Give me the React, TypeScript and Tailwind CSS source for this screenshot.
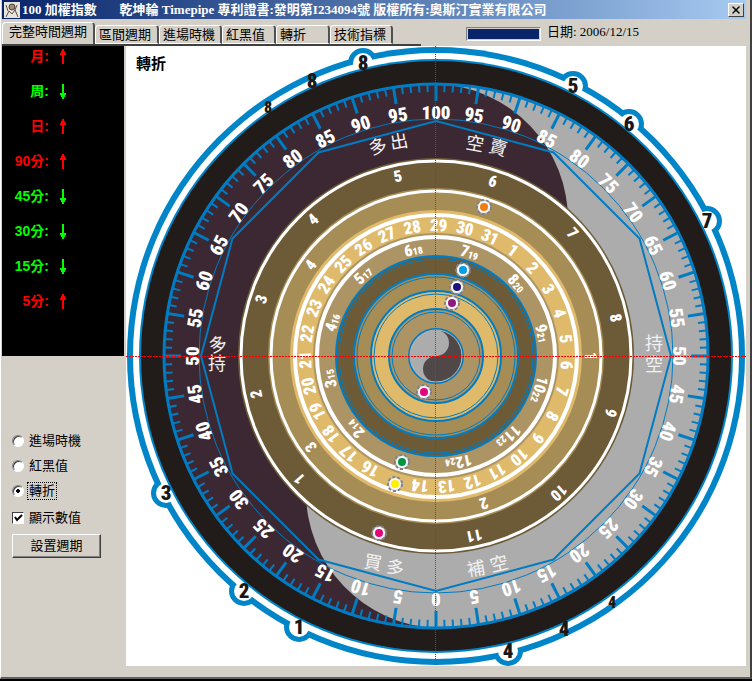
import type { ReactNode } from "react";
import { X } from "lucide-react";

const BLUE = "#0085c8";
const LINE = "#007cc3";
const DARK = "#6d5b38";
const MID = "#a68c55";
const GOLD = "#e0ba6b";
const TAN = "#ad9464";

const NUM =
  "Impact, 'Roboto Condensed', 'Open Sans Condensed', 'Noto Sans Condensed', 'Liberation Sans Narrow', 'Liberation Sans', sans-serif";
const CJK = "'Noto Sans CJK TC', sans-serif";

// centre of the dial inside the 620x620 view box
const C = 310;

const tabs = ["完整時間週期", "區間週期", "進場時機", "紅黑值", "轉折", "技術指標"];

const tabWidths = ["w-[64px]", "w-[63px]", "w-[54px]", "w-[54px]", "w-[63px]"];

const signals = [
  { label: "月", up: true },
  { label: "周", up: false },
  { label: "日", up: true },
  { label: "90分", up: true },
  { label: "45分", up: false },
  { label: "30分", up: false },
  { label: "15分", up: false },
  { label: "5分", up: true },
];

const bumps = [
  { x: 237, y: 17, t: "8" },
  { x: 447, y: 40, t: "5" },
  { x: 503, y: 78, t: "6" },
  { x: 581, y: 175, t: "7" },
  { x: 40, y: 447, t: "3" },
  { x: 118, y: 545, t: "2" },
  { x: 173, y: 581, t: "1" },
  { x: 382, y: 605, t: "4" },
];

const outerMarks = [
  { x: 186, y: 35, t: "8", size: 21 },
  { x: 142, y: 60, t: "8", size: 16 },
  { x: 438, y: 583, t: "4", size: 21 },
  { x: 486, y: 555, t: "4", size: 16 },
];

const markers = [
  { x: 358, y: 161, fill: "#f07d12" },
  { x: 337, y: 224, fill: "#009de8" },
  { x: 331, y: 241, fill: "#1d1278" },
  { x: 326, y: 257, fill: "#8e1a7d" },
  { x: 298, y: 346, fill: "#e5007e" },
  { x: 276, y: 416, fill: "#009540" },
  { x: 269, y: 438, fill: "#fff000" },
  { x: 253, y: 487, fill: "#e5007e" },
];

const words = [
  { x: 252, y: 101, t: "多", a: -16 },
  { x: 273, y: 96, t: "出", a: -10 },
  { x: 349, y: 98, t: "空", a: 10 },
  { x: 372, y: 102, t: "賣", a: 16 },
  { x: 92, y: 299, t: "多", a: -14 },
  { x: 91, y: 318, t: "持", a: 0 },
  { x: 528, y: 298, t: "持", a: 0 },
  { x: 528, y: 319, t: "空", a: 0 },
  { x: 247, y: 517, t: "買", a: 10 },
  { x: 269, y: 522, t: "多", a: 16 },
  { x: 350, y: 523, t: "補", a: -10 },
  { x: 373, y: 518, t: "空", a: -14 },
];

function polar(r: number, deg: number) {
  const a = (deg * Math.PI) / 180;
  return { x: C + r * Math.sin(a), y: C - r * Math.cos(a) };
}

function Radial({ r, deg, size, children }: { r: number; deg: number; size: number; children: ReactNode }) {
  const p = polar(r, deg);
  return (
    <text
      x={p.x}
      y={p.y + size * 0.36}
      transform={`rotate(${deg} ${p.x} ${p.y})`}
      fontSize={size}
      textAnchor="middle"
    >
      {children}
    </text>
  );
}

function Ring({ r, fill, stroke, w }: { r: number; fill?: string; stroke?: string; w?: number }) {
  return <circle cx={C} cy={C} r={r} fill={fill ?? "none"} stroke={stroke} strokeWidth={w} />;
}

function Dial() {
  const polygon = Array.from({ length: 12 }, (_, i) => {
    const p = polar(235, i * 30);
    return `${p.x},${p.y}`;
  }).join(" ");

  return (
    <svg viewBox="0 0 620 620" className="block w-full" role="img" aria-label="乾坤輪">
      {/* outer rim with its bulges */}
      <Ring r={309} fill={BLUE} />
      {bumps.map((b) => (
        <circle key={b.t} cx={b.x} cy={b.y} r={15} fill={BLUE} />
      ))}
      <Ring r={303} fill="#fff" />
      {bumps.map((b) => (
        <circle key={b.t} cx={b.x} cy={b.y} r={10} fill="#fff" />
      ))}
      <Ring r={297} fill={BLUE} />
      <Ring r={295} fill="#211b19" />
      <Ring r={272} fill="#acacac" />
      <path
        d="M310 38 A272 272 0 0 0 310 582 A136 136 0 0 1 180 446 A134 134 0 0 1 310 310 A134 134 0 0 0 442 176 A136 136 0 0 0 310 38Z"
        fill="#3b2833"
      />
      <Ring r={272} stroke={LINE} w={3} />

      {Array.from({ length: 200 }, (_, i) => (
        <line
          key={i}
          x1={C}
          x2={C}
          y1={38}
          y2={i % 5 === 0 ? 55 : 46}
          stroke={LINE}
          strokeWidth={i % 5 === 0 ? 3 : 2}
          transform={`rotate(${i * 1.8} ${C} ${C})`}
        />
      ))}
      <Ring r={237} stroke={LINE} w={1} />
      <polygon points={polygon} fill="none" stroke={LINE} strokeWidth={2} />

      {/* calendar rings */}
      <Ring r={198} fill={DARK} />
      <Ring r={195} stroke="#fff" w={3} />
      <Ring r={168} fill={MID} />
      <Ring r={165} stroke="#fff" w={3} />
      <Ring r={146} fill={GOLD} />
      <Ring r={141} stroke="#fff" w={4} />
      <Ring r={123} fill={TAN} />
      <Ring r={119} stroke="#fff" w={4} />
      <Ring r={100} fill={DARK} stroke={LINE} w={2} />
      <Ring r={97} stroke={LINE} w={1} />
      <Ring r={82} fill={MID} stroke={LINE} w={2} />
      <Ring r={79} stroke={LINE} w={1} />
      <Ring r={65} fill={GOLD} stroke={LINE} w={2} />
      <Ring r={62} stroke={LINE} w={1} />
      <Ring r={47} fill={TAN} stroke={LINE} w={2} />
      <Ring r={44} stroke={LINE} w={1} />
      <Ring r={27} fill="#acacac" stroke={LINE} w={2} />
      <path d="M310 284 A26 26 0 0 1 310 336 A13 13 0 0 1 310 310 A13 13 0 0 0 310 284Z" fill="#504848" />
      <Ring r={26} stroke="#b9b5b5" w={1} />

      <g fill="#fff" fontFamily={NUM} fontWeight={900}>
        {Array.from({ length: 40 }, (_, i) => (
          <Radial key={i} r={244} deg={i * 9} size={19}>
            {Math.abs(100 - i * 5)}
          </Radial>
        ))}
        {Array.from({ length: 11 }, (_, i) => (
          <Radial key={i} r={184} deg={228 + i * 30} size={16}>
            {i + 1}
          </Radial>
        ))}
        {Array.from({ length: 4 }, (_, i) => (
          <Radial key={i} r={155} deg={90 + i * 72} size={16}>
            {i + 1}
          </Radial>
        ))}
        {Array.from({ length: 31 }, (_, i) =>
          i === 14 ? null : (
            <Radial key={i} r={131} deg={36 + (i * 360) / 31} size={17}>
              {i + 1}
            </Radial>
          ),
        )}
        {Array.from({ length: 11 }, (_, i) => (
          <Radial key={i} r={109} deg={228 + i * 30} size={16}>
            {i + 2}
            <tspan fontSize={10}>{i + 14}</tspan>
          </Radial>
        ))}
      </g>

      <g fill="#f2f2f2" fontFamily={CJK} fontSize={18} textAnchor="middle">
        {words.map((w) => (
          <text key={`${w.x}-${w.y}`} x={w.x} y={w.y + 6} transform={`rotate(${w.a} ${w.x} ${w.y})`}>
            {w.t}
          </text>
        ))}
      </g>

      <g fill="#1b1717" fontFamily={NUM} fontWeight={900} textAnchor="middle">
        {bumps.map((b) => (
          <text key={b.t} x={b.x} y={b.y + 7} fontSize={21}>
            {b.t}
          </text>
        ))}
        {outerMarks.map((m) => (
          <text key={m.x} x={m.x} y={m.y + 7} fontSize={m.size}>
            {m.t}
          </text>
        ))}
      </g>

      {markers.map((m) => (
        <g key={`${m.x}-${m.y}`}>
          <circle cx={m.x} cy={m.y} r={7} fill="#c4c4ca" />
          <circle cx={m.x} cy={m.y} r={7} fill="none" stroke="#808088" strokeWidth={2} strokeDasharray="3 2" />
          <circle cx={m.x} cy={m.y} r={6} fill="#f8f8f8" />
          <circle cx={m.x} cy={m.y} r={4} fill={m.fill} />
        </g>
      ))}

      <path d="M0 310.5H620" stroke="#f00" strokeWidth={1} strokeDasharray="2 1" />
      <path d="M309.5 0V620" stroke="#c22" strokeWidth={1} strokeDasharray="1 1" />
    </svg>
  );
}

function Arrow({ up }: { up: boolean }) {
  return (
    <svg width="6" height="15" viewBox="0 0 6 15" className={up ? "" : "rotate-180"} aria-hidden>
      <path d="M2 0h2v2h1v2h1v2H4v9H2V6H0V4h1V2h1z" fill="currentColor" />
    </svg>
  );
}

function Option({ label, defaultChecked }: { label: string; defaultChecked?: boolean }) {
  return (
    <label className="flex h-[25px] items-center gap-[4px]">
      <input
        type="radio"
        name="mode"
        defaultChecked={defaultChecked}
        className="h-3 w-3 appearance-none rounded-full border border-t-[#808080] border-r-white border-b-white border-l-[#808080] bg-white shadow-[inset_1px_1px_0_#404040] checked:bg-[radial-gradient(circle,#000_2px,#fff_2px)]"
      />
      <span className={defaultChecked ? "px-px leading-4 outline-1 outline-dotted outline-black" : "px-px leading-4"}>
        {label}
      </span>
    </label>
  );
}

export default function App() {
  return (
    <div className="min-h-screen bg-black pb-[2px] font-['Liberation_Sans','Noto_Sans_CJK_TC',sans-serif] text-[13px] text-black">
      <div className="border-r-2 border-b-2 border-l border-r-[#404040] border-b-[#606060] border-l-white bg-[#d4d0c8] pr-[4px] pb-[11px] pl-px">
        <header className="flex h-[19px] items-center bg-linear-to-r from-[#0a246a] to-[#a6caf0] pr-[2px] pl-[2px]">
          <svg width="16" height="16" viewBox="0 0 16 16" className="shrink-0" aria-hidden>
            <rect width="16" height="16" fill="#e8e4dc" />
            <circle cx="8" cy="5" r="3" fill="#a08c78" stroke="#4c4036" />
            <path d="M2 15l3-6 3 3 3-4 3 7M2 3l2 6M13 3l-2 5" fill="none" stroke="#5b5048" />
          </svg>
          <h1 className="ml-[2px] flex-1 truncate font-['Liberation_Serif','Noto_Sans_CJK_TC',serif] text-[13px] leading-[19px] font-bold whitespace-pre text-white">
            100 加權指數{"       "}乾坤輪 Timepipe 專利證書:發明第I234094號 版權所有:奧斯汀實業有限公司
          </h1>
          <button
            type="button"
            aria-label="關閉"
            className="flex h-[14px] w-4 items-center justify-center border border-t-white border-r-[#404040] border-b-[#404040] border-l-white bg-[#d4d0c8]"
          >
            <X size={12} strokeWidth={3} />
          </button>
        </header>

        <div className="flex h-[27px] items-end">
          <nav className="flex w-[419px] items-end border-b-2 border-[#404040]" role="tablist">
            {tabs.map((tab, i) => (
              <button
                key={tab}
                type="button"
                role="tab"
                aria-selected={i === 0}
                className={
                  i === 0
                    ? "h-[22px] w-[93px] rounded-t-sm border-t border-r-2 border-l border-t-white border-r-[#505050] border-l-white pb-1 pl-1.5 text-left leading-[17px] whitespace-nowrap"
                    : `h-[19px] ${tabWidths[i - 1]} rounded-t-sm border-t border-r-2 border-b border-l border-t-white border-r-[#505050] border-b-white border-l-white pl-[3px] text-left leading-[17px] whitespace-nowrap`
                }
              >
                {tab}
              </button>
            ))}
          </nav>
          <div className="mt-2 ml-[45px] h-[14px] w-[75px] self-start border border-t-[#808080] border-r-white border-b-white border-l-[#808080] p-px">
            <div className="h-full bg-[#0a246a]" />
          </div>
          <p className="mt-1 ml-1.5 self-start font-['Liberation_Serif','Noto_Sans_CJK_TC',serif] text-[13px] leading-[17px] whitespace-nowrap">
            日期: 2006/12/15
          </p>
        </div>

        <main className="flex">
          <aside className="w-[124px] shrink-0 pr-[2px]">
            <ul className="h-[310px] bg-black pr-[58px] text-[14px] font-bold">
              {signals.map((s) => (
                <li
                  key={s.label}
                  className={
                    s.up
                      ? "mb-[14px] flex h-[21px] items-center justify-end gap-[11px] text-[#ff0000]"
                      : "mb-[14px] flex h-[21px] items-center justify-end gap-[11px] text-[#00ff00]"
                  }
                >
                  <span>{s.label}:</span>
                  <Arrow up={s.up} />
                </li>
              ))}
            </ul>

            <form className="pt-[72px] pl-[10px]" onSubmit={(e) => e.preventDefault()}>
              <Option label="進場時機" />
              <Option label="紅黑值" />
              <Option label="轉折" defaultChecked />
              <label className="mt-[2px] flex h-[25px] items-center gap-[4px]">
                <span className="grid h-3 w-3 place-items-center">
                  <input
                    type="checkbox"
                    defaultChecked
                    className="peer col-start-1 row-start-1 h-3 w-3 appearance-none border border-t-[#404040] border-r-white border-b-white border-l-[#404040] bg-white"
                  />
                  <svg
                    width="9"
                    height="9"
                    viewBox="0 0 9 9"
                    className="pointer-events-none invisible col-start-1 row-start-1 peer-checked:visible"
                    aria-hidden
                  >
                    <path d="M1 4l2 3 5-5" fill="none" stroke="#000" strokeWidth="2" />
                  </svg>
                </span>
                <span className="px-px">顯示數值</span>
              </label>
              <button
                type="submit"
                className="mt-1 block h-6 w-[89px] border border-t-white border-r-[#404040] border-b-[#404040] border-l-white leading-5 shadow-[inset_-1px_-1px_0_#808080]"
              >
                設置週期
              </button>
            </form>
          </aside>

          <section className="relative min-w-0 flex-1 bg-white">
            <h2 className="absolute top-2 left-[10px] text-[15px] leading-[20px] font-bold">轉折</h2>
            <Dial />
          </section>
        </main>
      </div>
    </div>
  );
}
